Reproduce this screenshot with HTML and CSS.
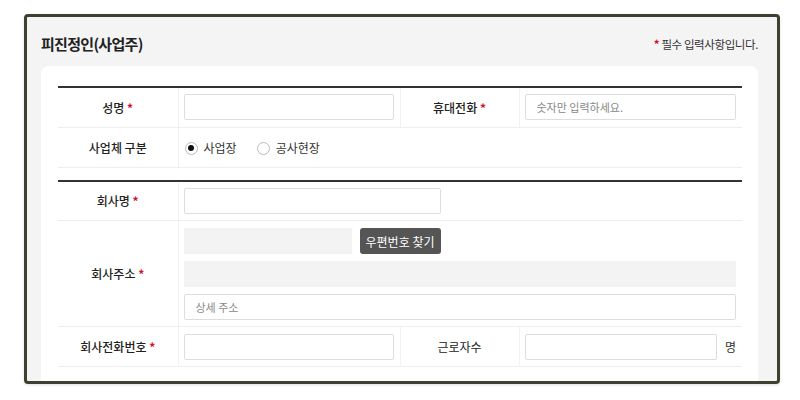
FILE: index.html
```html
<html>
	<head>
		<meta charset="utf-8">
		<link rel="stylesheet" href="styles.css">
	</head>
	<body>
		<div class="frame">
			<div class="head">
				<h2 class="title">피진정인(사업주)</h2>
				<p class="note"><span class="req">*</span> 필수 입력사항입니다.</p>
			</div>
			<div class="card">
				<table class="form">
					<colgroup>
						<col class="c-label"><col class="c-value"><col class="c-label2"><col>
					</colgroup>
					<tr>
						<th>성명 <span class="req">*</span></th>
						<td><input class="field" type="text"></td>
						<th>휴대전화 <span class="req">*</span></th>
						<td><input class="field" type="text" placeholder="숫자만 입력하세요."></td>
					</tr>
					<tr>
						<th>사업체 구분</th>
						<td colspan="3">
							<div class="radios">
								<label class="radio"><span class="dot on"></span>사업장</label>
								<label class="radio"><span class="dot"></span>공사현장</label>
							</div>
						</td>
					</tr>
				</table>

				<table class="form second">
					<colgroup>
						<col class="c-label"><col class="c-value"><col class="c-label2"><col>
					</colgroup>
					<tr>
						<th>회사명 <span class="req">*</span></th>
						<td colspan="3"><input class="field mid" type="text"></td>
					</tr>
					<tr class="tall">
						<th>회사주소 <span class="req">*</span></th>
						<td colspan="3">
							<div class="addr">
								<div class="zip-row">
									<div class="gray zip"></div>
									<button class="btn">우편번호 찾기</button>
								</div>
								<div class="gray"></div>
								<input class="field" type="text" placeholder="상세 주소">
							</div>
						</td>
					</tr>
					<tr>
						<th>회사전화번호 <span class="req">*</span></th>
						<td><input class="field" type="text"></td>
						<th class="plain">근로자수</th>
						<td><div class="unit-row"><input class="field" type="text"><span class="unit">명</span></div></td>
					</tr>
				</table>
			</div>
		</div>
	</body>
</html>
```

FILE: styles.css
```css
body {
	margin: 0;
	background: #ffffff;
	font-family: "Noto Sans CJK KR", "Noto Sans", sans-serif;
	color: #333;
}
.frame {
	box-sizing: border-box;
	width: 756px;
	height: 370px;
	margin: 14px 0 0 24px;
	border: 3px solid #3d4130;
	border-radius: 4px;
	background: #f4f4f4;
	padding: 0 19px 0 14px;
	overflow: hidden;
	box-shadow: 0 1px 3px rgba(0, 0, 0, 0.12);
}
.head {
	display: flex;
	justify-content: space-between;
	align-items: center;
	padding: 17px 0 0 0;
	margin-bottom: 12px;
}
.title {
	margin: 0;
	font-size: 15px;
	line-height: 20px;
	font-weight: 700;
	color: #222;
	letter-spacing: -0.7px;
}
.note {
	margin: 0;
	font-size: 11.5px;
	line-height: 20px;
	color: #333;
	letter-spacing: -0.4px;
}
.req {
	color: #d0112b;
	font-weight: 700;
}
.card {
	background: #fff;
	border-radius: 8px;
	padding: 20px 16px 40px 17px;
}
.form {
	width: 684px;
	border-collapse: collapse;
	table-layout: fixed;
	border-top: 2px solid #333;
}
.form.second {
	margin-top: 12px;
}
.form tr {
	height: 40px;
}
.c-label { width: 120px; }
.c-value { width: 222px; }
.c-label2 { width: 119px; }
.form th {
	padding: 0;
	font-size: 12px;
	font-weight: 500;
	color: #222;
	text-align: center;
	border-bottom: 1px solid #eee;
	border-right: 1px solid #f2f2f2;
}
.form th.plain {
	font-weight: 400;
}
.form td {
	padding: 0 6px 0 5px;
	border-bottom: 1px solid #eee;
	border-right: 1px solid #f2f2f2;
	font-size: 12px;
}
.form td:last-child {
	border-right: 0;
}
.field {
	box-sizing: border-box;
	display: block;
	width: 100%;
	height: 26px;
	border: 1px solid #ddd;
	border-radius: 2px;
	padding: 0 11px;
	font-family: inherit;
	font-size: 11px;
	color: #333;
	background: #fff;
}
.field::placeholder {
	color: #888;
}
.field.mid {
	width: 257px;
}
.radios {
	display: flex;
	align-items: center;
	gap: 20px;
	padding: 2px 0 0 1px;
}
.radio {
	display: flex;
	align-items: center;
	gap: 6px;
	font-size: 12px;
	line-height: 16px;
	color: #333;
}
.dot {
	box-sizing: border-box;
	width: 13px;
	height: 13px;
	border: 1px solid #bbb;
	border-radius: 50%;
	display: flex;
	align-items: center;
	justify-content: center;
}
.dot.on::after {
	content: "";
	width: 6px;
	height: 6px;
	border-radius: 50%;
	background: #111;
}
.addr {
	display: flex;
	flex-direction: column;
	gap: 7px;
	padding: 7px 0 6px;
}
.zip-row {
	display: flex;
	gap: 8px;
}
.gray {
	height: 26px;
	background: #f3f3f3;
}
.zip {
	width: 168px;
}
.btn {
	height: 26px;
	width: 81px;
	border: 0;
	border-radius: 3px;
	background: #555;
	color: #fff;
	font-family: inherit;
	font-size: 12px;
	padding: 0;
}
.unit-row {
	display: flex;
	align-items: center;
	gap: 8px;
}
.unit-row .field {
	width: 193px;
}
.unit {
	font-size: 12px;
	color: #333;
}
```
